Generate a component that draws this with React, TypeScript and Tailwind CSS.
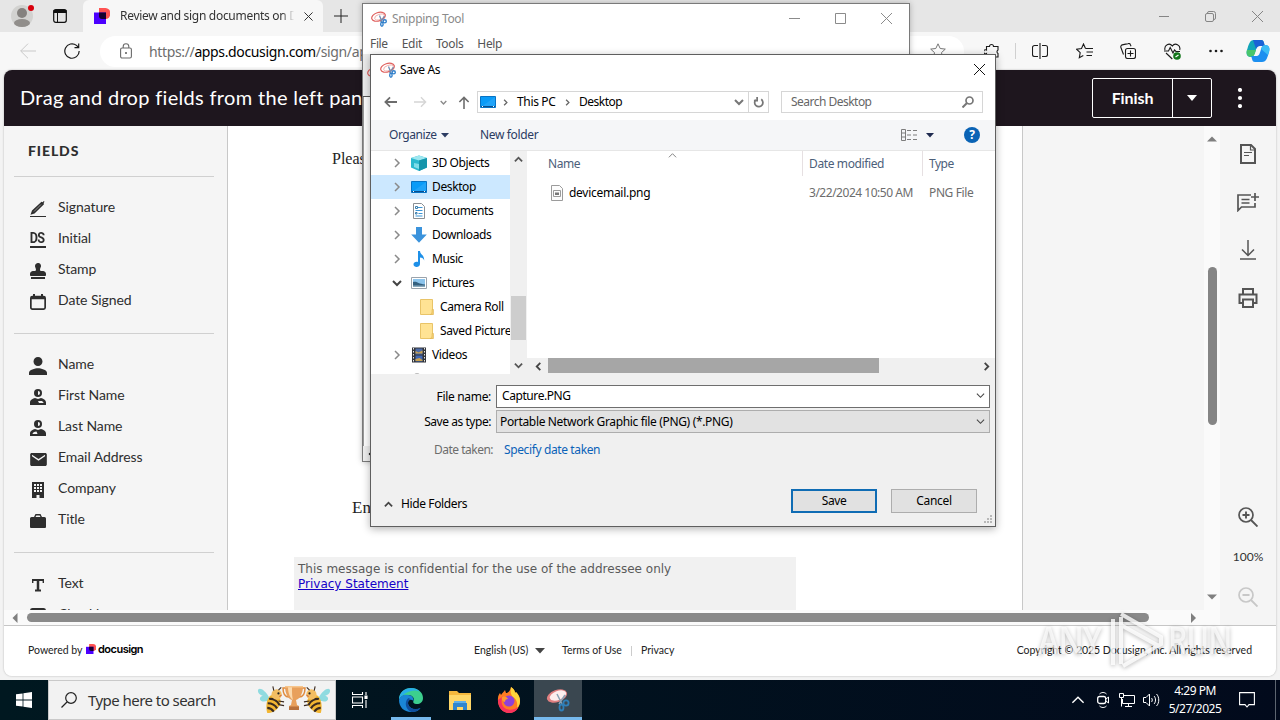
import type { ReactNode } from "react";
import { FaStamp } from "react-icons/fa";
import { IoMdMail, IoMdPerson } from "react-icons/io";

type IconProps = { className?: string };

const SnipIcon = ({ className = "w-4 h-4" }: IconProps) => (
  <svg viewBox="0 0 16 16" className={className} fill="none">
    <ellipse cx="7.500" cy="5.700" rx="7" ry="4.200" stroke="#e0605e" strokeWidth="1.200" transform="rotate(-18 7.500 5.700)" />
    <ellipse cx="8.500" cy="6" rx="5" ry="2.600" stroke="#eba3a0" strokeWidth="0.800" transform="rotate(-18 8.500 6)" />
    <path d="M8.500 4.500L11 11M13.500 5l-4 6" stroke="#6f8fb4" strokeWidth="1.300" />
    <circle cx="13.700" cy="10.300" r="1.600" stroke="#2f7fcb" strokeWidth="1.400" />
    <ellipse cx="10.900" cy="13.200" rx="1.200" ry="2" stroke="#2f7fcb" strokeWidth="1.400" />
  </svg>
);

const DocusignMark = ({ className }: IconProps) => (
  <svg viewBox="0 0 16 16" className={className}>
    <path d="M5 0h6.500a4.500 5 0 0 1 0 11H5z" fill="#ff5252" />
    <path d="M0 4.500h12V16H0z" fill="#4c00ff" />
    <path d="M5 4.500h7V11H8a3 3 0 0 1-3-3z" fill="#16002e" />
  </svg>
);

const Chevron = ({ d, className, w = 1.5 }: { d: string; className?: string; w?: number }) => (
  <svg viewBox="0 0 10 10" className={className} fill="none" stroke="currentColor" strokeWidth={w}>
    <path d={d} />
  </svg>
);

const RIGHT = "M3 1l4 4-4 4";
const DOWN = "M1 3l4 4 4-4";
const UP = "M1 7l4-4 4 4";
const LEFT = "M7 1L3 5l4 4";

const MonitorIcon = () => (
  <svg viewBox="0 0 16 16" className="w-4 h-4">
    <path d="M0.500 2.500h15v11h-15z" fill="#0a9bf7" stroke="#0873c4" />
    <path d="M1 13L15 3v10z" fill="#35aefb" opacity=".5" />
    <path d="M1 12.500h14" stroke="#0a4d8c" />
    <path d="M2 12.500h1M13 12.500h1" stroke="#fff" />
  </svg>
);

const FolderIcon = () => (
  <svg viewBox="0 0 16 16" className="w-4 h-4">
    <path d="M1.500 0.500h12v15h-12z" fill="#ffe394" stroke="#e9c468" />
    <path d="M11 15.500c2 0 2-2 2-5h1.500v5z" fill="#f5cf6d" stroke="#dfb75a" strokeWidth=".6" />
  </svg>
);

const CubeIcon = () => (
  <svg viewBox="0 0 16 16" className="w-4 h-4">
    <path d="M0 3l8-2.500L16 3v9.500L8 16l-8-3.500z" fill="#2cb9cf" />
    <path d="M0 3l8-2.500L16 3 8 5.500z" fill="#9ee7f0" />
    <path d="M8 5.500L16 3v9.500L8 16z" fill="#1595ab" />
    <path d="M3 8l5 1v5l-5-2z" fill="#80dde9" />
  </svg>
);

const DocIcon = () => (
  <svg viewBox="0 0 16 16" className="w-4 h-4" fill="none">
    <path d="M2.500 0.500h8l3 3v12h-11z" fill="#fff" stroke="#8a8f94" />
    <path d="M7 4.500h4.500M4.500 7.500h7M7.500 10.500h4M4.500 13h7" stroke="#3d96d6" strokeWidth="1.200" />
    <path d="M4.500 3.500h2v2h-2zM4.500 9.500h1.500v1.500h-1.500z" stroke="#3b7fae" />
  </svg>
);

const DownloadIcon = () => (
  <svg viewBox="0 0 16 16" className="w-4 h-4">
    <path d="M5 0h6v7.500h4.800L8 15.700.2 7.500H5z" fill="#3b93dc" />
  </svg>
);

const MusicIcon = () => (
  <svg viewBox="0 0 16 16" className="w-4 h-4">
    <path d="M7 0h2c0 3.500 4.500 4 4.200 9.500-.6-2-2-3-4.200-3V13c0 3.800-6.500 3.800-6.500.5C2.500 11 5 10.400 7 11z" fill="#1e90e8" />
  </svg>
);

const PictureIcon = () => (
  <svg viewBox="0 0 16 16" className="w-4 h-4">
    <path d="M.5 2.500h15v11H.5z" fill="#fff" stroke="#9aa3ac" />
    <path d="M2 4h12v8H2z" fill="#8cc4ec" />
    <path d="M2 7c4-1 5 2 12 2.500V12H2z" fill="#34607f" />
    <path d="M2 10.500h12V12H2z" fill="#88a9bd" />
  </svg>
);

const VideoIcon = () => (
  <svg viewBox="0 0 16 16" className="w-4 h-4">
    <path d="M1 .5h14v15H1z" fill="#303338" />
    <path d="M2.500 1v14M13.500 1v14" stroke="#e8e8e8" strokeDasharray="1.500 1.500" />
    <path d="M4.500 1.500h7v6h-7z" fill="#4d6ca8" />
    <path d="M4.500 8.500h7v6h-7z" fill="#4168b5" />
    <path d="M4.500 4l3 1.500 4-2v3h-7zM4.500 12l4-1 3 2v1h-7z" fill="#caa14e" />
  </svg>
);

const tree: { name: string; icon: ReactNode; open?: boolean; child?: boolean; active?: boolean }[] = [
  { name: "3D Objects", icon: <CubeIcon /> },
  { name: "Desktop", icon: <MonitorIcon />, active: true },
  { name: "Documents", icon: <DocIcon /> },
  { name: "Downloads", icon: <DownloadIcon /> },
  { name: "Music", icon: <MusicIcon /> },
  { name: "Pictures", icon: <PictureIcon />, open: true },
  { name: "Camera Roll", icon: <FolderIcon />, child: true },
  { name: "Saved Pictures", icon: <FolderIcon />, child: true },
  { name: "Videos", icon: <VideoIcon /> },
];

const PenIcon = () => (
  <svg viewBox="0 0 16 16" className="w-4 h-4" fill="#2e2e2e">
    <path d="M0 15h16v1H0zM.5 13.700L2 9.500 11.500.8l1.200.4L13.800 0l.7.700-.9 1.300.4 1.300L4.500 12.500z" />
    <path d="M4 10.500l7-7" stroke="#f5f5f5" strokeWidth=".5" />
  </svg>
);

const InitialIcon = () => (
  <div className="w-4 h-4 border-b-2 border-[#2e2e2e] font-['Roboto'] font-bold text-[14px] leading-[13px] tracking-[-0.8px] text-center">
    <span className="inline-block scale-x-90 origin-center -ml-px">DS</span>
  </div>
);

const CalendarIcon = () => (
  <svg viewBox="0 0 16 16" className="w-4 h-4" fill="none" stroke="#2e2e2e" strokeWidth="1.700">
    <rect x=".85" y="2.500" width="14.300" height="12.600" rx="1.500" />
    <path d="M1 4h14" strokeWidth="2.500" />
    <path d="M4 0v3M12 0v3" strokeWidth="2" />
  </svg>
);

const HalfPersonIcon = ({ first }: { first?: boolean }) => (
  <svg viewBox="0 0 16 16" className="w-4 h-4">
    <circle cx="8" cy="4" r="4" fill="#2e2e2e" />
    <path d={first ? "M8 2v4a2 2 0 0 0 0-4z" : "M8 2v4a2 2 0 0 0 0-4z"} fill="#f5f5f5" />
    <path d="M0 16v-2.500C0 11 3 9.500 5 9l3 1 3-1c2 .5 5 2 5 4.500V16z" fill="#2e2e2e" />
    <path d={first ? "M8 12h4l1.500 1.500V14H9z" : "M2.500 14c0-1.500 2-2.500 4-2.500L7.500 14z"} fill="#f5f5f5" />
  </svg>
);

const CompanyIcon = () => (
  <svg viewBox="0 0 16 16" className="w-4 h-4" fill="#2e2e2e">
    <path d="M2 0h12v16H9.500v-3h-3v3H2z" />
    <path d="M4 3h8M4 6h8M4 9h8" stroke="#f5f5f5" strokeWidth="2" strokeDasharray="2 1" />
  </svg>
);

const TitleIcon = () => (
  <svg viewBox="0 0 16 16" className="w-4 h-4" fill="#2e2e2e">
    <path d="M0 5.500A1.500 1.500 0 0 1 1.500 4H4l1.500-3h5L12 4h2.500A1.500 1.500 0 0 1 16 5.500V14a1 1 0 0 1-1 1H1a1 1 0 0 1-1-1z" />
    <path d="M5.500 4l.8-1.500h3.400l.8 1.500z" fill="#f5f5f5" />
  </svg>
);

const TextIcon = () => (
  <svg viewBox="0 0 16 16" className="w-4 h-4" fill="none" stroke="#2e2e2e">
    <path d="M2 3h12M5 13.500h6" strokeWidth="2" />
    <path d="M8 3v11" strokeWidth="2.500" />
    <path d="M2.700 2v4M13.300 2v4" strokeWidth="1.400" />
  </svg>
);

const CheckboxIcon = () => (
  <svg viewBox="0 0 16 16" className="w-4 h-4" fill="none" stroke="#2e2e2e" strokeWidth="2">
    <rect x="1" y="1" width="14" height="14" rx="1.500" />
  </svg>
);

const fieldGroups = [
  [
    { name: "Signature", icon: <PenIcon /> },
    { name: "Initial", icon: <InitialIcon /> },
    { name: "Stamp", icon: <FaStamp className="w-4 h-4" /> },
    { name: "Date Signed", icon: <CalendarIcon /> },
  ],
  [
    { name: "Name", icon: <IoMdPerson className="w-6 h-6 -m-1 shrink-0" /> },
    { name: "First Name", icon: <HalfPersonIcon first /> },
    { name: "Last Name", icon: <HalfPersonIcon /> },
    { name: "Email Address", icon: <IoMdMail className="w-[19px] h-[19px] -mx-[1.5px] shrink-0" /> },
    { name: "Company", icon: <CompanyIcon /> },
    { name: "Title", icon: <TitleIcon /> },
  ],
  [
    { name: "Text", icon: <TextIcon /> },
    { name: "Checkbox", icon: <CheckboxIcon /> },
  ],
];

const TabStrip = () => (
  <div className="flex h-8 bg-[#e6e6e6]">
    <div className="flex items-center w-[83px] pl-[11px] gap-5">
      <svg viewBox="0 0 24 24" className="w-6 h-6">
        <circle cx="11" cy="12" r="11" fill="#d2d2d0" />
        <circle cx="11" cy="9" r="5" fill="#85827f" />
        <ellipse cx="11" cy="19" rx="8" ry="4" fill="#918e8b" />
        <circle cx="20" cy="4" r="3" fill="#d8000c" />
      </svg>
      <svg viewBox="0 0 16 16" className="w-4 h-4 -ml-[3px]" fill="none" stroke="#111">
        <rect x="1.700" y="1.700" width="12.600" height="12.600" rx="2" strokeWidth="1.200" />
        <path d="M1.500 3.500h13" strokeWidth="3" />
        <path d="M5.500 4v10" />
      </svg>
    </div>
    <div className="flex items-center w-[240px] pl-[11px] rounded-t-md bg-[#f7f7f7]">
      <DocusignMark className="w-4 h-4" />
      <span className="ml-[10px] w-[176px] overflow-hidden whitespace-nowrap text-[12px] tracking-[-0.3px] text-[#333] [mask-image:linear-gradient(90deg,#000_92%,transparent_99%)]">
        Review and sign documents on Docusign
      </span>
      <svg viewBox="0 0 10 10" className="w-[9px] h-[9px] ml-[8px]" stroke="#333" strokeWidth="1.100">
        <path d="M.5.5l9 9M9.500.5l-9 9" />
      </svg>
    </div>
    <svg viewBox="0 0 14 14" className="w-[14px] h-[14px] mt-[9px] ml-[11px]" stroke="#222">
      <path d="M7 0v14M0 7h14" />
    </svg>
    <div className="flex items-center ml-auto pr-[17px] gap-[36px] text-[#858585]">
      <svg viewBox="0 0 10 10" className="w-[10px] h-[10px]" stroke="currentColor"><path d="M0 5.500h10" /></svg>
      <svg viewBox="0 0 11 11" className="w-[11px] h-[11px]" fill="none" stroke="currentColor">
        <rect x=".5" y="2.500" width="8" height="8" rx="1.500" />
        <path d="M2.500 2.500V2A1.500 1.500 0 0 1 4 .5h4.500a2 2 0 0 1 2 2V7A1.500 1.500 0 0 1 9 8.500" />
      </svg>
      <svg viewBox="0 0 11 11" className="w-[11px] h-[11px]" stroke="currentColor"><path d="M0 0l11 11M11 0L0 11" /></svg>
    </div>
  </div>
);

const Toolbar = () => (
  <div className="flex items-center h-[38px] bg-[#f7f7f7] text-[#1b1b1b]">
    <svg viewBox="0 0 16 16" className="w-4 h-4 ml-5" fill="none" stroke="#c9c9c9"><path d="M16 8H.7M8 .7L.7 8 8 15.300" /></svg>
    <svg viewBox="0 0 16 16" className="w-4 h-4 ml-7" fill="none" stroke="currentColor" strokeWidth="1.200">
      <path d="M15.200 8A7.200 7.200 0 1 1 12.500 2.400L14.500 4.500M14.700.5v4.200h-4.200" />
    </svg>
    <div className="flex items-center w-[864px] h-[31px] ml-5 pl-5 pr-[18px] bg-white rounded-full text-[14px] text-[#6d6d6d]">
      <svg viewBox="0 0 12 16" className="w-3 h-4" fill="none" stroke="#6a6a6a" strokeWidth="1.100">
        <rect x=".6" y="5" width="10.800" height="10" rx="1.500" />
        <path d="M3.200 5V3.500a2.800 2.800 0 0 1 5.600 0V5" />
        <circle cx="6" cy="10" r=".5" fill="#6a6a6a" />
      </svg>
      <span className="ml-[17px] w-[400px] overflow-hidden whitespace-nowrap tracking-[-0.36px]">
        https://<span className="text-black">apps.docusign.com</span>/sign/app/documents
      </span>
      <svg viewBox="0 0 16 16" className="w-4 h-4 ml-auto" fill="none" stroke="#777">
        <path d="M8 .8l2.200 4.700 5.100.6-3.800 3.500 1 5.100L8 12.200l-4.500 2.500 1-5.100L.7 6.100l5.100-.6z" />
      </svg>
    </div>
    <svg viewBox="0 0 16 16" className="w-4 h-4 ml-[20px]" fill="none" stroke="currentColor" strokeWidth="1.100">
      <path d="M2.500 3.500h3a2 2 0 1 1 4 0h4.500V7a2 2 0 0 0 0 3.500V14h-4.500a2 2 0 0 0-4 0h-3v-3.500a2 2 0 1 1 0-3.500z" />
    </svg>
    <div className="w-px h-4 ml-[15px] bg-[#d0d0d0]" />
    <svg viewBox="0 0 16 16" className="w-4 h-4 ml-[16px]" fill="none" stroke="currentColor" strokeWidth="1.100">
      <path d="M8 0v16M6 2.500H2.500a2 2 0 0 0-2 2v7a2 2 0 0 0 2 2H6M10 2.500h3.500a2 2 0 0 1 2 2v7a2 2 0 0 1-2 2H10" />
    </svg>
    <svg viewBox="0 0 17 16" className="w-[17px] h-4 ml-[28px]" fill="none" stroke="currentColor" strokeWidth="1.100">
      <path d="M9.500 5.500L7.500 1 5.500 5.500.6 6.200l3.600 3.400-.9 5.200 4-2.300M9.500 5.500H17M10.500 9H17M10.500 12.500H16" />
    </svg>
    <svg viewBox="0 0 16 16" className="w-4 h-4 ml-[27px]" fill="none" stroke="currentColor" strokeWidth="1.100">
      <rect x="5.500" y="5.500" width="10" height="10" rx="2" />
      <path d="M10.500 7.500v6M7.500 10.500h6M3.500 11.500l-2.600-7a2 2 0 0 1 1.300-2.600L8 .6a2 2 0 0 1 2.500 1.300l.5 1.400" />
    </svg>
    <svg viewBox="0 0 17 17" className="w-[17px] h-[17px] ml-[28px]" fill="none" stroke="currentColor" strokeWidth="1.100">
      <path d="M1 7C-.2 2 5.500-.8 8.300 3 11-.8 17 2 15.700 7M2 10l6.300 6M0 8h4.500l1.700-3.500L9 10l1.500-3L12 8.500h4" />
      <circle cx="13" cy="13" r="3.800" fill="#13761b" stroke="none" />
      <path d="M11.500 14l3-2" stroke="#fff" />
    </svg>
    <svg viewBox="0 0 14 4" className="w-[14px] h-1 ml-[28px]" fill="currentColor">
      <circle cx="1.500" cy="2" r="1.300" /><circle cx="7" cy="2" r="1.300" /><circle cx="12.500" cy="2" r="1.300" />
    </svg>
    <svg viewBox="0 0 24 24" className="w-6 h-6 ml-[23px]">
      <path d="M8 1h7c2 0 2.500 1 3 3l.8 3H14c-3 0-3.500 2-4.500 5-1 3.500-2 6-5 6-4 0-4.500-4-3.500-7 1.500-5 2.500-10 7-10z" fill="#13a6b8" />
      <path d="M7 1h8c2 0 2.500 1 3 3l.8 3H14c-2 0-3 1-4 3z" fill="#1b62d6" />
      <path d="M1 11c-1 3 0 7 4 7 2 0 3-1.500 4-4l1-3z" fill="#48c66c" />
      <path d="M16 23H9c-2 0-2.500-1-3-3l-.8-3H10c3 0 3.500-2 4.500-5 1-3.500 2-6 5-6 4 0 4.500 4 3.500 7-1.500 5-2.500 10-7 10z" fill="#1c8ff0" />
      <path d="M15 10c1-3 2-4 4.500-4 4 0 4.500 4 3.500 7l-1 3z" fill="#3bbdf5" />
    </svg>
  </div>
);

const PageHeader = () => (
  <div className="flex items-center h-14 pl-4 pr-[33px] rounded-t-lg bg-[#1e161e] text-white font-['Lato']">
    <span className="text-[20px] tracking-[0.32px] whitespace-nowrap mb-[2px]">Drag and drop fields from the left panel</span>
    <div className="flex h-10 ml-auto border border-white rounded-xs">
      <div className="flex items-center justify-center w-[80px] border-r border-white font-bold text-[16px] tracking-[-0.1px]">Finish</div>
      <div className="flex items-center justify-center w-[38px]">
        <svg viewBox="0 0 10 6" className="w-[10px] h-[6px]" fill="#fff"><path d="M0 0h10L5 6z" /></svg>
      </div>
    </div>
    <svg viewBox="0 0 6 20" className="w-[6px] h-5 ml-[25px]" fill="#fff">
      <circle cx="3" cy="2" r="2.100" /><circle cx="3" cy="10" r="2.100" /><circle cx="3" cy="18" r="2.100" />
    </svg>
  </div>
);

const Sidebar = () => (
  <div className="w-[224px] h-full shrink-0 overflow-hidden pl-[10px] pr-[13px] bg-[#f5f5f5] border-r border-[#c8c8c8] text-[#2e2e2e] font-['Lato']">
    <div className="flex items-center h-[50px] pl-[14px] pb-[2px] font-black text-[14px] tracking-[0.9px]">FIELDS</div>
    {fieldGroups.map((group, index) => (
      <div key={index} className="py-4 pl-4 border-t border-[#d0d0d0]">
        {group.map((field) => (
          <div key={field.name} className="flex items-center h-[31px]">
            <div className="flex items-center justify-center w-4 h-4 mt-px">{field.icon}</div>
            <span className="ml-3 text-[14px] leading-4 tracking-[-0.08px] mb-[4px]">{field.name}</span>
          </div>
        ))}
      </div>
    ))}
  </div>
);

const Magnifier = ({ plus }: { plus?: boolean }) => (
  <svg viewBox="0 0 20 20" className="w-5 h-5" fill="none" stroke="currentColor" strokeWidth="1.700">
    <circle cx="8" cy="8" r="7" />
    <path d="M13 13l6.500 6.500M4.500 8h7" strokeWidth="1.900" />
    {plus && <path d="M8 4.500v7" strokeWidth="1.900" />}
  </svg>
);

const RightRail = () => (
  <div className="flex flex-col items-center w-14 h-[499px] bg-[#f5f5f5] text-[#555] font-['Lato']">
    <svg viewBox="0 0 16 20" className="w-4 h-5 mt-[18px]" fill="none" stroke="currentColor" strokeWidth="2">
      <path d="M1 1h10l4 4v14H1z" />
      <path d="M10.500 1v5H15" strokeWidth="1.200" />
      <path d="M4 8.500h8M4 11.500h5" strokeWidth="1" />
    </svg>
    <svg viewBox="0 0 22 20" className="w-[22px] h-5 mt-[28px]" fill="none" stroke="currentColor" strokeWidth="1.700">
      <path d="M14 3H1v15.500L4.500 15H18V11M18 1v8M14 5h8M4.500 7.500h8M4.500 11h8" />
    </svg>
    <svg viewBox="0 0 18 20" className="w-[18px] h-5 mt-[28px]" fill="none" stroke="currentColor" strokeWidth="1.500">
      <path d="M9 0v15M3 9.500l6 6 6-6M1 19h16" />
    </svg>
    <svg viewBox="0 0 20 20" className="w-5 h-5 mt-[28px]" fill="none" stroke="currentColor" strokeWidth="2">
      <path d="M5 6V1h10v5M5 15H1.500V6.500h17V15H15M5 11.500h10V19H5z" />
    </svg>
    <div className="mt-[199px]"><Magnifier plus /></div>
    <span className="mt-[23px] text-[12px] leading-[14px] text-[#333]">100%</span>
    <div className="mt-[23px] text-[#c8c8c8]"><Magnifier /></div>
  </div>
);

const DocumentView = () => (
  <div className="w-[795px] border-r border-[#c8c8c8] bg-white font-['Liberation_Serif']">
    <div className="pl-[104px] pt-[23px] text-[16px] leading-5 text-[#222]">Please</div>
    <div className="pl-[124px] mt-[329px] text-[17px] leading-5 text-[#222]">En</div>
    <div className="w-[502px] h-[54px] ml-[66px] mt-[39px] pl-1 pt-[5px] bg-[#f1f1f1] font-['DejaVu_Sans'] text-[12px] leading-[15px] text-[#5a5a5a]">
      <div className="tracking-[0.01px]">This message is confidential for the use of the addressee only</div>
      <div className="text-[#1500c8] underline">Privacy Statement</div>
    </div>
  </div>
);

const Triangle = ({ d }: { d: string }) => (
  <svg viewBox="0 0 10 10" className="w-[10px] h-[10px] shrink-0" fill="#7f7f7f"><path d={d} /></svg>
);

const PageFooter = () => (
  <div className="flex items-center h-[51px] px-6 pb-px border-t border-[#c6c6c6] rounded-b-lg bg-white text-[10.5px] text-[#222] font-['Lato']">
    <span className="w-[55px] whitespace-nowrap">Powered by</span>
    <DocusignMark className="w-[10px] h-[10px] ml-[3px] mb-[3px]" />
    <span className="ml-[2px] mb-[2px] w-[47px] font-['Inter'] font-semibold text-[11px] tracking-[-0.52px] text-black">docusign</span>
    <span className="ml-[329px] w-[54px] whitespace-nowrap">English (US)</span>
    <svg viewBox="0 0 10 6" className="w-[10px] h-[6px] ml-[7px]" fill="#444"><path d="M0 0h10L5 5.500z" /></svg>
    <span className="ml-[17px] w-[60px] whitespace-nowrap">Terms of Use</span>
    <span className="w-px h-2.5 ml-[9px] bg-[#ccc]" />
    <span className="ml-[9px]">Privacy</span>
    <span className="ml-auto tracking-[-0.02px]">Copyright © 2025 Docusign, Inc. All rights reserved</span>
  </div>
);

const Browser = () => (
  <div className="h-[680px] bg-[#f3f3f3]">
    <TabStrip />
    <Toolbar />
    <div className="mx-1 rounded-lg shadow-[0_0_2px_#aaa]">
      <PageHeader />
      <div className="flex h-[499px] bg-[#f5f5f5]">
        <div className="w-[1216px]">
          <div className="flex h-[484px] overflow-hidden">
            <Sidebar />
            <DocumentView />
            <div className="flex-1" />
            <div className="flex flex-col items-center w-4 pt-2 pb-2 bg-[#fafafa]">
              <Triangle d="M0 7.500h10l-5-5z" />
              <div className="w-[9px] h-[158px] mt-[123px] rounded-full bg-[#858585]" />
              <div className="mt-auto"><Triangle d="M0 2.500h10l-5 5z" /></div>
            </div>
          </div>
          <div className="flex items-center h-[15px] pl-[6px] bg-[#fafafa]">
            <Triangle d="M7.500 0v10l-5-5z" />
            <div className="w-[1122px] h-[9px] ml-[7px] rounded-full bg-[#8a8a8a]" />
            <div className="ml-[39px]"><Triangle d="M3 0v10l5-5z" /></div>
          </div>
        </div>
        <RightRail />
      </div>
      <PageFooter />
    </div>
  </div>
);

const SnippingWindow = () => (
  <div className="absolute left-[362px] top-[3px] flex flex-col w-[548px] h-[459px] border border-[#7a7a7a] bg-white shadow-[0_0_6px_rgba(0,0,0,0.25)]">
    <div className="flex items-center h-[29px] pl-2 pr-[17px] text-[#8b8b8b]">
      <SnipIcon />
      <span className="ml-[5px] text-[12px] tracking-[-0.33px]">Snipping Tool</span>
      <div className="flex items-center gap-[35px] ml-auto">
        <svg viewBox="0 0 11 11" className="w-[11px] h-[11px]" stroke="currentColor"><path d="M0 5.500h11" /></svg>
        <svg viewBox="0 0 11 11" className="w-[11px] h-[11px]" stroke="currentColor" fill="none"><path d="M.5.5h10v10H.5z" /></svg>
        <svg viewBox="0 0 11 11" className="w-[11px] h-[11px]" stroke="currentColor"><path d="M0 0l11 11M11 0L0 11" /></svg>
      </div>
    </div>
    <div className="flex items-center h-[21px] pl-[7px] gap-[14px] text-[12px] tracking-[-0.35px] text-[#555]">
      <span>File</span><span>Edit</span><span>Tools</span><span>Help</span>
    </div>
    <div className="h-[43px] pl-1 pt-3 bg-[#ececec] border-b border-[#555]"><SnipIcon /></div>
    <div className="flex-1 border-l border-[#999]" />
    <div className="h-[15px] bg-[#efefef] pl-1"><Chevron d={LEFT} className="w-2 h-2 mt-1" /></div>
  </div>
);

const Sep = () => <Chevron d={RIGHT} w={1.8} className="w-[7px] h-[7px] text-[#666]" />;

const AddressRow = () => (
  <div className="flex items-center h-[22px] mt-[6px] pl-[13px] text-[12px]">
    <svg viewBox="0 0 14 12" className="w-[13px] h-3" fill="none" stroke="#6c6c6c" strokeWidth="1.900"><path d="M14 6H1.500M6.500 1L1.500 6l5 5" /></svg>
    <svg viewBox="0 0 14 12" className="w-[13px] h-3 ml-[17px]" fill="none" stroke="#d5d5d5" strokeWidth="1.500"><path d="M0 6h12.500M7.500 1l5 5-5 5" /></svg>
    <Chevron d={DOWN} w={2} className="w-[7px] h-[7px] ml-[13px] text-[#8a8a8a]" />
    <svg viewBox="0 0 12 14" className="w-[12px] h-[13px] ml-[11px]" fill="none" stroke="#6c6c6c" strokeWidth="1.700"><path d="M6 14V1.500M1 6.500l5-5 5 5" /></svg>
    <div className="flex items-center w-[292px] h-[22px] ml-[7px] pl-[2px] border border-[#d6d6d6]">
      <MonitorIcon />
      <div className="w-[7px] ml-[6px] mr-[8px]"><Sep /></div>
      <span className="w-[40px] whitespace-nowrap tracking-[-0.35px]">This PC</span>
      <div className="w-[7px] mx-[7px]"><Sep /></div>
      <span className="ml-px tracking-[-0.5px]">Desktop</span>
      <Chevron d={DOWN} w={2} className="w-[10px] h-[10px] ml-auto mr-[4px] text-[#777]" />
      <div className="flex items-center justify-center w-[20px] h-full border-l border-[#d6d6d6]">
        <svg viewBox="0 0 12 12" className="w-[11px] h-[11px]" fill="none" stroke="#777" strokeWidth="1.900">
          <path d="M9 2.500A4.500 4.500 0 1 1 3 3" /><path d="M3.500 0v4H0" transform="translate(1 0)" />
        </svg>
      </div>
    </div>
    <div className="flex items-center w-[202px] h-[22px] ml-[12px] pl-[9px] pr-[8px] border border-[#d6d6d6] text-[#666]">
      <span className="tracking-[-0.52px]">Search Desktop</span>
      <svg viewBox="0 0 12 12" className="w-[12px] h-[12px] ml-auto" fill="none" stroke="#777" strokeWidth="1.700"><circle cx="7.500" cy="4.500" r="3.500" /><path d="M5 7L.5 11.500" strokeWidth="2" /></svg>
    </div>
  </div>
);

const CommandBar = () => (
  <div className="flex items-center h-[31px] mt-[7px] pl-[18px] pr-[15px] bg-[#f5f6f8] border-b border-[#e6e6e6] text-[12px] text-[#2c3c63]">
    <span className="w-[47px] tracking-[-0.45px]">Organize</span>
    <svg viewBox="0 0 8 5" className="w-2 h-[5px] ml-[5px]" fill="#2c3c63"><path d="M0 0h8L4 4.500z" /></svg>
    <span className="ml-[31px] tracking-[-0.35px]">New folder</span>
    <svg viewBox="0 0 16 12" className="w-4 h-3 ml-auto" fill="none" stroke="#7d7d7d">
      <path d="M.5.5h4v11h-4zM.5 4h4M.5 8h4" />
      <path d="M6 1.500h4M12 1.500h4M6 6h4M12 6h4M6 10.500h4M12 10.500h4" />
    </svg>
    <svg viewBox="0 0 8 5" className="w-2 h-[5px] ml-[9px]" fill="#1f2b50"><path d="M0 0h8L4 4.500z" /></svg>
    <div className="flex items-center justify-center w-4 h-4 ml-[30px] rounded-full bg-[#0a63b5] text-white text-[12px] font-bold leading-none">?</div>
  </div>
);

const FolderTree = () => (
  <div className="w-[139px] h-[223px] overflow-hidden text-[12px]">
    {tree.map((node) => (
      <div
        key={node.name}
        className={node.active ? "flex items-center h-6 pl-[21px] bg-[#cce8ff]" : "flex items-center h-6 pl-[21px]"}
      >
        <div className="w-[10px] shrink-0">
          {!node.child && (
            <Chevron
              d={node.open ? DOWN : RIGHT}
              w={node.open ? 2 : 1.5}
              className={node.open ? "w-[10px] h-[10px] text-[#444]" : "w-[10px] h-[10px] text-[#8a8a8a]"}
            />
          )}
        </div>
        <div className={node.child ? "ml-[17px] shrink-0" : "ml-[9px] shrink-0"}>{node.icon}</div>
        <span className="ml-[5px] whitespace-nowrap tracking-[-0.38px]">{node.name}</span>
      </div>
    ))}
    <div className="w-[6px] h-2 ml-[43px] mt-[6px] rounded-t bg-[#bbb]" />
  </div>
);

const FileList = () => (
  <div className="flex flex-col flex-1 h-[223px] text-[12px]">
    <div className="flex items-center h-[25px] text-[#4c607a]">
      <div className="w-[275px] pl-[21px]">
        <Chevron d={UP} w={1} className="w-[9px] h-[9px] -mt-1 ml-[120px] -mb-[5px] text-[#777]" />
        <span className="tracking-[-0.4px]">Name</span>
      </div>
      <div className="w-[120px] h-full pl-[6px] pt-1 border-l border-[#e6e0e2] tracking-[-0.38px]">Date modified</div>
      <div className="h-full pl-[6px] pt-1 border-l border-[#e6e0e2] tracking-[-0.5px]">Type</div>
    </div>
    <div className="flex items-center h-[24px] mt-[5px] pl-[22px] text-[#6d6d6d]">
      <svg viewBox="0 0 16 16" className="w-4 h-4" fill="none" stroke="#9b9b9b">
        <path d="M2.500.5h8l3 3v12h-11z" fill="#fcfcfc" />
        <path d="M4.500 5.500h7v6h-7z" />
        <path d="M6 7.500h4v2.500H6z" fill="#777" stroke="none" />
      </svg>
      <span className="w-[240px] ml-[4px] text-black tracking-[-0.28px]">devicemail.png</span>
      <span className="w-[120px] whitespace-nowrap tracking-[-0.48px]">3/22/2024 10:50 AM</span>
      <span className="tracking-[-0.38px]">PNG File</span>
    </div>
    <div className="flex items-center h-4 mt-auto pl-[7px] pr-1 bg-[#f0f0f0] text-[#444]">
      <Chevron d={LEFT} w={2} className="w-[9px] h-[9px]" />
      <div className="w-[331px] h-[15px] ml-[5px] mb-px bg-[#a6a6a6]" />
      <Chevron d={RIGHT} w={2} className="w-[9px] h-[9px] ml-auto" />
    </div>
  </div>
);

const DialogForm = () => (
  <div className="flex-1 bg-[#f0f0f0] text-[12px]">
    <div className="flex items-center h-[23px] mt-[11px] pr-[5px]">
      <span className="w-[120px] mr-[5px] text-right tracking-[-0.32px]">File name:</span>
      <div className="flex items-center flex-1 h-[23px] pl-[5px] pr-1 pb-[2px] border border-[#6e6e6e] bg-white">
        <span className="tracking-[-0.42px]">Capture.PNG</span>
        <Chevron d={DOWN} w={1.2} className="w-[9px] h-[9px] ml-auto text-[#444]" />
      </div>
    </div>
    <div className="flex items-center h-[23px] mt-[2px] pr-[5px]">
      <span className="w-[120px] mr-[5px] text-right tracking-[-0.45px]">Save as type:</span>
      <div className="flex items-center flex-1 h-[23px] pl-[3px] pr-1 border border-[#adadad] bg-[#e2e2e2]">
        <span className="tracking-[-0.34px]">Portable Network Graphic file (PNG) (*.PNG)</span>
        <Chevron d={DOWN} w={1.2} className="w-[9px] h-[9px] ml-auto text-[#444]" />
      </div>
    </div>
    <div className="flex items-center h-[20px] mt-[7px] pl-[63px]">
      <span className="w-[70px] tracking-[-0.5px] text-[#6d6d6d]">Date taken:</span>
      <span className="tracking-[-0.38px] text-[#0b62b8]">Specify date taken</span>
    </div>
    <div className="flex items-center h-[24px] mt-[29px] pl-[13px] pr-[18px]">
      <Chevron d={UP} w={2} className="w-[9px] h-[9px] mt-[6px] text-[#444]" />
      <span className="ml-[8px] mt-[6px] tracking-[-0.38px]">Hide Folders</span>
      <div className="flex items-center justify-center w-[86px] h-[24px] ml-auto border-2 border-[#0f6cb4] bg-[#e1e1e1] tracking-[-0.4px]">Save</div>
      <div className="flex items-center justify-center w-[86px] h-[24px] ml-[14px] border border-[#adadad] bg-[#e1e1e1] tracking-[-0.3px]">Cancel</div>
    </div>
    <svg viewBox="0 0 9 9" className="w-[9px] h-[9px] ml-auto mr-[2px] mt-[2px]" fill="#b8b8b8">
      <path d="M6 0h2v2H6zM3 3h2v2H3zM6 3h2v2H6zM0 6h2v2H0zM3 6h2v2H3zM6 6h2v2H6z" />
    </svg>
  </div>
);

const SaveDialog = () => (
  <div className="absolute left-[370px] top-[54px] flex flex-col w-[626px] h-[473px] border border-[#5f5f5f] bg-white text-black shadow-[0_2px_8px_rgba(0,0,0,0.3)]">
    <div className="flex items-center h-[30px] pl-[9px] pr-[10px]">
      <SnipIcon />
      <span className="ml-[4px] text-[12px] tracking-[-0.35px]">Save As</span>
      <svg viewBox="0 0 11 11" className="w-[11px] h-[11px] ml-auto mb-[2px]" stroke="#111"><path d="M0 0l11 11M11 0L0 11" /></svg>
    </div>
    <AddressRow />
    <CommandBar />
    <div className="flex h-[223px]">
      <FolderTree />
      <div className="flex flex-col items-center w-[17px] py-[4px] bg-[#f0f0f0] text-[#555]">
        <Chevron d={UP} w={2} className="w-[9px] h-[9px]" />
        <div className="w-[15px] h-[44px] mt-[132px] bg-[#cdcdcd]" />
        <Chevron d={DOWN} w={2} className="w-[9px] h-[9px] mt-auto" />
      </div>
      <FileList />
    </div>
    <DialogForm />
  </div>
);

const Bee = ({ className }: IconProps) => (
  <svg viewBox="0 0 30 30" className={className}>
    <path d="M14 14C8 2 1 1 1 5c0 3 3 5 6 5.500C2 11 2 16 6 16.500c4 .5 8-1 8-2.500z" fill="#8fdbe0" />
    <path d="M15 10c7-1 12 3 10 9s-8 10-14 10c-2-6-1-16 4-19z" fill="#f2b632" />
    <path d="M13 14c4-1 9 2 11 6M11.500 18.500c4 0 8 2 10 5.500M11 23.500c3 0 5 1.500 7 4" stroke="#3a2a20" strokeWidth="2.300" fill="none" />
    <circle cx="21" cy="9" r="5.500" fill="#f3bd62" />
    <circle cx="23" cy="8" r="1.200" fill="#222" />
    <path d="M24 11c1 0 2-.5 2-1.500" stroke="#c0442a" fill="none" />
    <path d="M18 5l-1-4.500M23 4.500l3-3M23 16l6 1M23 20l6 1" stroke="#3a2a20" strokeWidth="1.200" />
  </svg>
);

const Trophy = () => (
  <svg viewBox="0 0 26 26" className="w-[26px] h-[26px] -mx-[4px] -mt-1">
    <path d="M6 3H2c0 6 2 9 6 9M20 3h4c0 6-2 9-6 9" fill="none" stroke="#e08a3c" strokeWidth="1.500" />
    <path d="M4 1h18c0 9-4 13-7 14l1 5 2 1v4H8v-4l2-1 1-5C8 14 4 10 4 1z" fill="#e8a05c" />
    <path d="M7 2h4c0 6 0 10 1 13-3-2-5-7-5-13z" fill="#fbd9ac" />
    <path d="M4 1h18v1.500H4z" fill="#f7c58c" />
    <path d="M8 21.500h10V25H8z" fill="#b8713c" />
  </svg>
);

const Taskbar = () => (
  <div className="flex h-10 bg-linear-to-r from-[#001820] to-[#020a1c] text-white">
    <div className="flex items-center justify-center w-[48px]">
      <svg viewBox="0 0 16 16" className="w-4 h-4" fill="#fff"><path d="M0 2.300L6.600 1.400v6.200H0zM7.400 1.300L16 0v7.600H7.400zM0 8.400h6.600v6.200L0 13.700zM7.400 8.400H16V16l-8.600-1.300z" /></svg>
    </div>
    <div className="flex items-center w-[288px] pl-[12px] pr-[4px] border border-[#c9c9c9] bg-[#f2f2f2] text-[#333]">
      <svg viewBox="0 0 16 16" className="w-4 h-4" fill="none" stroke="#222" strokeWidth="1.200"><circle cx="10" cy="6" r="5.300" /><path d="M6 10L.5 15.500" /></svg>
      <span className="ml-[11px] text-[15px] tracking-[-0.55px]">Type here to search</span>
      <div className="flex items-center ml-auto">
        <Bee className="w-[28px] h-[32px]" />
        <Trophy />
        <Bee className="w-[28px] h-[32px] -scale-x-100" />
      </div>
    </div>
    <div className="flex items-center justify-center w-[48px]">
      <svg viewBox="0 0 16 16" className="w-4 h-4" fill="none" stroke="#fff" strokeWidth="1.100">
        <path d="M.5 0v2.500h10V0M.5 5h10v6H.5zM.5 16v-2.500h10V16M14 0v3M14 8v8" /><path d="M13 4h2v2.500h-2z" fill="#fff" />
      </svg>
    </div>
    <div className="flex flex-col items-center w-[54px]">
      <svg viewBox="0 0 24 24" className="w-6 h-6 mt-2">
        <path d="M0 12C0 4 6 0 12 0c7 0 12 4.500 12 10 0 4-3 6-6 6s-4.500-1.500-3.500-3C16 10 13 7 9 7c-5 0-9 2-9 5z" fill="#3ccf8e" />
        <path d="M0 12C0 4 6 0 12 0c4 0 7 1.500 9 4C16 0 4 4 0 12z" fill="#28aee8" />
        <path d="M0 12c1-4 5-6 9-5 4 0 6 3 5.500 6-3-3-7 0-5 4 1.500 4 7 5.500 12 3-2 3-5.500 4-9.500 4C5 24 0 19 0 12z" fill="#1a86d6" />
        <path d="M9.500 10c-4 3-4 11 3 14 4 0 7-1.500 9-4-5 2-10.500 1-12-3-1-2.500 0-5 2-6z" fill="#0f4e9d" />
      </svg>
      <div className="w-10 h-[3px] mt-auto bg-[#76b9ed]" />
    </div>
    <div className="flex items-center justify-center w-[44px]">
      <svg viewBox="0 0 22 20" className="w-[22px] h-5">
        <path d="M0 1h8l2 2h12v17H0z" fill="#f5b83d" /><path d="M0 5h22v15H0z" fill="#ffd768" />
        <path d="M4 20v-7h14v7h-4v-3H8v3z" fill="#2f86cf" /><path d="M5 11h12v2H5z" fill="#5fb0ea" />
      </svg>
    </div>
    <div className="flex items-center justify-center w-[52px] pl-px">
      <svg viewBox="0 0 24 26" className="w-6 h-[26px]">
        <path d="M1 11c0-2 1-4 2-5l1 2c1-2 3-3 4-5l1 3c2 0 5-3 5-6 3 2 4 4 4 6l1-1c3 3 4 6 4 9 0 7-5 12-11 12S0 20 1 11z" fill="#ff7b22" />
        <path d="M14 0c3 2 4 4 4 6l1-1c3 3 4 6 4 9 0 3-1 5-3 7 1-6-1-9-4-11-2-2-3-5-2-10z" fill="#ffd43b" />
        <path d="M1 13c0 8 5 13 11 13 4 0 8-2 9-6-5 4-14 4-16-3-1-3 0-6 1-8z" fill="#f9325c" />
        <circle cx="12" cy="14" r="5.500" fill="#8f41d8" />
        <path d="M5 10c3-1 5 0 6 2-2 0-3 1-3 3-2 0-4-3-3-5z" fill="#ff9a2e" />
      </svg>
    </div>
    <div className="flex flex-col items-center w-[48px] bg-[#3a4750]">
      <svg viewBox="0 0 24 24" className="w-6 h-6 mt-2" fill="none">
        <ellipse cx="11" cy="8" rx="10.500" ry="6" fill="#e07f80" transform="rotate(-20 11 8)" />
        <ellipse cx="12" cy="7.500" rx="8.500" ry="4.500" fill="#fdeeee" transform="rotate(-20 12 7.500)" />
        <path d="M11 6l5 10M19 7l-6 9" stroke="#8aa3b5" strokeWidth="1.500" />
        <circle cx="20" cy="15" r="2.600" stroke="#2f7fb8" strokeWidth="1.800" />
        <ellipse cx="15.500" cy="19.500" rx="2" ry="3" stroke="#2f7fb8" strokeWidth="1.800" />
      </svg>
      <div className="w-full h-[3px] mt-auto bg-[#76b9ed]" />
    </div>
    <div className="flex items-center ml-auto">
      <Chevron d={UP} w={1} className="w-[14px] h-[14px]" />
      <svg viewBox="0 0 12 16" className="w-3 h-4 ml-[12px]" fill="none" stroke="#fff">
        <path d="M2.500 2C4.500 0 7.500 0 9.500 2M2.500 14c2 2 5 2 7 0M9 7l2.500-2v6L9 9" /><rect x=".7" y="4.500" width="8" height="7" rx="2" strokeWidth="1.300" />
      </svg>
      <svg viewBox="0 0 16 14" className="w-4 h-[14px] ml-[10px]" fill="none" stroke="#fff">
        <path d="M5 2.500h10.500v8H3.500V6M9.500 10.500v3M6 13.500h7M.5.500h4v4h-4zM2.500 4.500v9" />
      </svg>
      <svg viewBox="0 0 17 14" className="w-[17px] h-[14px] ml-[8px]" fill="none" stroke="#fff">
        <path d="M.5 4.500H3L6.500 1v12L3 9.500H.5zM8.500 5c1 1 1 3 0 4M11 3c2 2 2 6 0 8M13.500 1c3 3 3 9 0 12" />
      </svg>
      <div className="w-[70px] text-center text-[12px] leading-[18px] tracking-[-0.48px]">
        <div>4:29 PM</div>
        <div>5/27/2025</div>
      </div>
      <svg viewBox="0 0 16 16" className="w-4 h-4 ml-[9px] mr-[20px]" fill="none" stroke="#fff" strokeWidth="1.100"><path d="M.6.6h14.800v12H10L8 15l-2-2.400H.6z" /></svg>
      <div className="w-px h-10 mr-1 bg-[#5d6570]" />
    </div>
  </div>
);

const Watermark = () => (
  <div className="absolute left-[1038px] top-[608px] flex items-center w-[198px] h-[66px] font-['Open_Sans'] font-semibold text-[38px] leading-none text-white/70 drop-shadow-[0_1px_2px_rgba(0,0,0,0.35)]">
    <span className="w-[68px] mb-1 origin-left scale-x-[0.85] tracking-[-1px]">ANY</span>
    <svg viewBox="0 0 58 64" className="w-[58px] h-16 ml-[2px] shrink-0" fill="none" stroke="#fff" strokeOpacity=".8" strokeWidth="4">
      <path d="M13 8v47M5 10v46M13 5l40 23v7L15 57M13 16l36 20" />
    </svg>
    <span className="ml-[2px] mb-1 origin-left scale-x-[0.8] tracking-[-1px]">RUN</span>
  </div>
);

const App = () => {
  return (
    <div className="relative w-[1280px] h-[720px] overflow-hidden font-['Noto_Sans',sans-serif]">
      <Browser />
      <Taskbar />
      <Watermark />
      <SnippingWindow />
      <SaveDialog />
    </div>
  );
};

export default App;
